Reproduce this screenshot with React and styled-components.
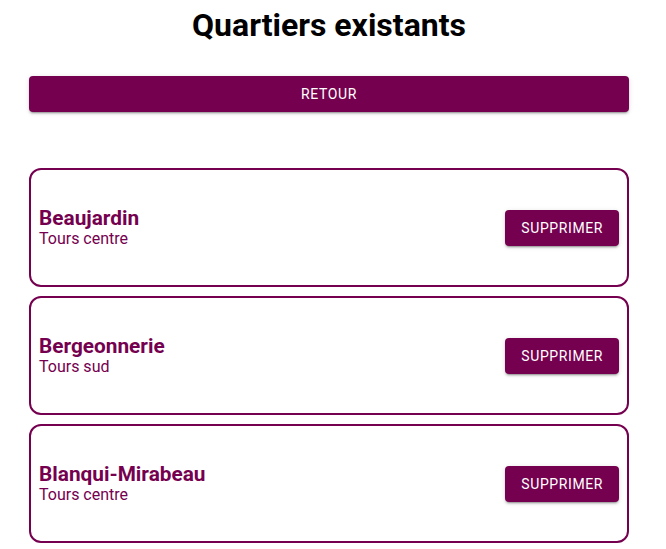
import styled, { createGlobalStyle } from "styled-components";

const quartiers = [
    { nom: "Beaujardin", ville: "Tours centre" },
    { nom: "Bergeonnerie", ville: "Tours sud" },
    { nom: "Blanqui-Mirabeau", ville: "Tours centre" },
];

function App() {
    return (
        <>
            <GlobalStyle />
            <Page>
                <Title>Quartiers existants</Title>
                <BackButton>Retour</BackButton>
                <List>
                    {quartiers.map((q) => (
                        <Card key={q.nom}>
                            <Info>
                                <Name>{q.nom}</Name>
                                <City>{q.ville}</City>
                            </Info>
                            <DeleteButton>Supprimer</DeleteButton>
                        </Card>
                    ))}
                </List>
            </Page>
        </>
    );
}

const GlobalStyle = createGlobalStyle`
    body {
        margin: 0;
        font-family: Roboto, "Liberation Sans", sans-serif;
        background: #ffffff;
    }
`;

const Page = styled.div`
    display: flex;
    flex-direction: column;
    width: 600px;
    margin: 0 29px;
`;

const Title = styled.h1`
    margin: 6px 0 0;
    height: 38px;

    font-weight: 700;
    font-size: 32px;
    line-height: 38px;
    text-align: center;
    color: #000000;
`;

const Button = styled.button`
    display: flex;
    align-items: center;
    justify-content: center;

    height: 36px;
    border: none;
    border-radius: 4px;
    background: #75004f;
    box-shadow: 0px 3px 1px -2px rgba(0, 0, 0, 0.2), 0px 2px 2px 0px rgba(0, 0, 0, 0.14), 0px 1px 5px 0px rgba(0, 0, 0, 0.12);

    font-family: Roboto, "Liberation Sans", sans-serif;
    font-weight: 400;
    font-size: 14px;
    letter-spacing: 0.6px;
    text-transform: uppercase;
    color: #ffffff;
    cursor: pointer;
`;

const BackButton = styled(Button)`
    width: 100%;
    margin-top: 32px;
`;

const List = styled.div`
    display: flex;
    flex-direction: column;
    gap: 9px;
    margin-top: 56px;
`;

const Card = styled.div`
    display: flex;
    align-items: center;
    justify-content: space-between;

    box-sizing: border-box;
    height: 119px;
    padding: 0 8px;

    border: 2px solid #75004f;
    border-radius: 12px;
`;

const Info = styled.div`
    display: flex;
    flex-direction: column;
    color: #75004f;
`;

const Name = styled.span`
    font-weight: 700;
    font-size: 20.8px;
    line-height: 22px;
`;

const City = styled.span`
    font-size: 16px;
    line-height: 20px;
`;

const DeleteButton = styled(Button)`
    padding: 0 16px;
`;

export default App;
